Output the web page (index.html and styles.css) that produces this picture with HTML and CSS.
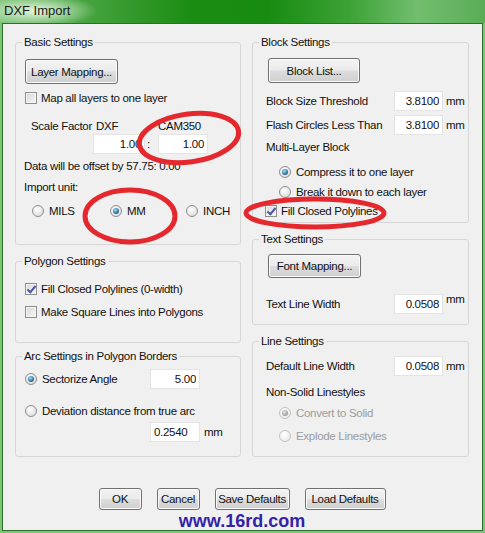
FILE: index.html
```html
<!DOCTYPE html>
<html lang="en">
<head>
    <meta charset="UTF-8">
    <title>DXF Import</title>
    <link rel="stylesheet" href="styles.css">
</head>
<body>
    <div class="window">
        <div class="titlebar"><span class="title">DXF Import</span></div>

        <div class="client">
            <div class="columns">
                <div class="col">
                    <fieldset class="group basic">
                        <legend>Basic Settings</legend>
                        <button class="btn btn-layer">Layer Mapping...</button>
                        <label class="opt opt-map"><span class="check"></span>Map all layers to one layer</label>
                        <div class="scale">
                            <span>Scale Factor</span>
                            <span class="scale-dxf">DXF</span>
                            <span></span>
                            <span>CAM350</span>
                            <span></span>
                            <input class="field" type="text" value="1.00">
                            <span class="colon">:</span>
                            <input class="field" type="text" value="1.00">
                        </div>
                        <div class="line offset">Data will be offset by 57.75: 0.00</div>
                        <div class="line unit-label">Import unit:</div>
                        <div class="units">
                            <label class="opt"><span class="radio"></span>MILS</label>
                            <label class="opt"><span class="radio on"></span>MM</label>
                            <label class="opt"><span class="radio"></span>INCH</label>
                        </div>
                    </fieldset>

                    <fieldset class="group polygon">
                        <legend>Polygon Settings</legend>
                        <label class="opt poly-fill"><span class="check on"></span>Fill Closed Polylines (0-width)</label>
                        <label class="opt poly-square"><span class="check"></span>Make Square Lines into Polygons</label>
                    </fieldset>

                    <fieldset class="group arc">
                        <legend>Arc Settings in Polygon Borders</legend>
                        <div class="arc-row">
                            <label class="opt"><span class="radio on"></span>Sectorize Angle</label>
                            <input class="field" type="text" value="5.00">
                        </div>
                        <label class="opt arc-dev"><span class="radio"></span>Deviation distance from true arc</label>
                        <div class="arc-dist">
                            <input class="field left" type="text" value="0.2540">
                            <span class="unit">mm</span>
                        </div>
                    </fieldset>
                </div>

                <div class="col">
                    <fieldset class="group right block">
                        <legend>Block Settings</legend>
                        <button class="btn btn-block">Block List...</button>
                        <div class="value-row first">
                            <span>Block Size Threshold</span>
                            <input class="field" type="text" value="3.8100">
                            <span>mm</span>
                        </div>
                        <div class="value-row">
                            <span>Flash Circles Less Than</span>
                            <input class="field" type="text" value="3.8100">
                            <span>mm</span>
                        </div>
                        <div class="line multi">Multi-Layer Block</div>
                        <label class="opt sub compress"><span class="radio on"></span>Compress it to one layer</label>
                        <label class="opt sub break"><span class="radio"></span>Break it down to each layer</label>
                        <label class="opt block-fill"><span class="check on"></span>Fill Closed Polylines</label>
                    </fieldset>

                    <fieldset class="group right text">
                        <legend>Text Settings</legend>
                        <button class="btn btn-font">Font Mapping...</button>
                        <div class="value-row text-width">
                            <span>Text Line Width</span>
                            <input class="field" type="text" value="0.0508">
                            <span class="raised">mm</span>
                        </div>
                    </fieldset>

                    <fieldset class="group right linegroup">
                        <legend>Line Settings</legend>
                        <div class="value-row first">
                            <span>Default Line Width</span>
                            <input class="field" type="text" value="0.0508">
                            <span>mm</span>
                        </div>
                        <div class="line nonsolid">Non-Solid Linestyles</div>
                        <label class="opt sub disabled convert"><span class="radio on"></span>Convert to Solid</label>
                        <label class="opt sub disabled explode"><span class="radio"></span>Explode Linestyles</label>
                    </fieldset>
                </div>
            </div>

            <div class="actions">
                <button class="btn btn-ok">OK</button>
                <button class="btn btn-cancel">Cancel</button>
                <button class="btn btn-save">Save Defaults</button>
                <button class="btn btn-load">Load Defaults</button>
            </div>
            <div class="watermark">www.16rd.com</div>
        </div>

        <!-- red marker rings drawn over the dialog -->
        <svg class="marks" width="485" height="533" viewBox="0 0 485 533">
            <ellipse cx="189" cy="138" rx="50" ry="24" transform="rotate(-8 189 138)"/>
            <ellipse cx="130" cy="216" rx="45" ry="26"/>
            <ellipse cx="315" cy="213" rx="69" ry="14"/>
        </svg>
    </div>
</body>
</html>
```

FILE: styles.css
```css
html, body {
    margin: 0;
    padding: 0;
    background: #ffffff;
}

body {
    font-family: "Liberation Sans", Arial, sans-serif;
    font-size: 11.5px;
    letter-spacing: -0.3px;
    color: #111;
}

.window {
    position: relative;
    width: 485px;
    height: 533px;
    box-sizing: border-box;
    padding: 0 2px 2px 2px;
    background: #7cc478;
    display: flex;
    flex-direction: column;
}

.titlebar {
    height: 24px;
    margin: 0 -2px;
    background:
        radial-gradient(ellipse 62px 16px at 36px 11px, rgba(236, 250, 232, 0.95), rgba(236, 250, 232, 0)),
        linear-gradient(to right, #78c174 0%, #45a33f 18%, #1a8c12 40%, #178b10 55%, #3ca236 72%, #72be6e 86%, #5aad56 100%);
    display: flex;
    align-items: center;
}

.title {
    font-size: 13px;
    letter-spacing: 0;
    color: #1a1a1a;
    margin-left: 4px;
    margin-top: -3px;
}

.client {
    flex: 1;
    border: 1px solid #2f6d2b;
    background: #f0f0f0;
    padding: 11px 13px 0 12px;
}

.columns {
    display: grid;
    grid-template-columns: 226px 217px;
    column-gap: 11px;
}

.col {
    display: flex;
    flex-direction: column;
}

/* group boxes */
.group {
    margin: 0;
    padding: 0 8px;
    border: 1px solid #d6d6d6;
    border-radius: 3px;
    box-sizing: border-box;
    min-width: 0;
}

.group legend {
    padding: 0 2px;
    margin-left: -2px;
    line-height: 14px;
}

.group.right {
    padding: 0 13px;
}

.group.right legend {
    margin-left: -7px;
}

.basic { height: 210px; }
.polygon { height: 89px; margin-top: 9px; }
.arc { height: 108px; margin-top: 6px; }
.block { height: 188px; }
.text { height: 93px; margin-top: 9px; }
.linegroup { height: 123px; margin-top: 9px; }

.line {
    line-height: 14px;
    white-space: nowrap;
}

/* buttons */
.btn {
    display: block;
    box-sizing: border-box;
    padding: 0;
    border: 1px solid #707070;
    border-radius: 3px;
    background: linear-gradient(#f3f3f3 0%, #ebebeb 48%, #dddddd 52%, #cfcfcf 100%);
    box-shadow: inset 0 0 0 1px #fbfbfb;
    font-family: inherit;
    font-size: 11.5px;
    letter-spacing: -0.3px;
    color: #111;
    white-space: nowrap;
}

.btn-layer { width: 93px; height: 25px; margin: 10px 0 0 1px; }
.btn-block { width: 92px; height: 25px; margin: 9px 0 0 2px; }
.btn-font { width: 93px; height: 24px; margin: 8px 0 0 2px; }

/* checkbox & radio */
.opt {
    display: flex;
    align-items: center;
    height: 14px;
    white-space: nowrap;
}

.check {
    width: 12px;
    height: 12px;
    box-sizing: border-box;
    border: 1px solid #8f8f8f;
    background: linear-gradient(135deg, #d8d8d8, #f7f7f7);
    box-shadow: inset 0 0 0 1px #f4f4f4;
    margin-right: 4px;
    position: relative;
    flex: none;
}

.check.on::after {
    content: "";
    position: absolute;
    left: 3px;
    top: 0px;
    width: 3px;
    height: 7px;
    border: solid #4b55a6;
    border-width: 0 2px 2px 0;
    transform: rotate(40deg);
}

.radio {
    width: 12px;
    height: 12px;
    box-sizing: border-box;
    border: 1px solid #8e8e8e;
    border-radius: 50%;
    background: radial-gradient(circle at 40% 35%, #ffffff, #d4d4d4);
    margin-right: 5px;
    position: relative;
    flex: none;
}

.radio.on::after {
    content: "";
    position: absolute;
    left: 2px;
    top: 2px;
    width: 6px;
    height: 6px;
    border-radius: 50%;
    background: radial-gradient(circle at 40% 35%, #9fe0ff, #1c5f8c 70%);
}

.opt.disabled {
    color: #9c9c9c;
}

.opt.disabled .radio {
    border-color: #c2c2c2;
    background: radial-gradient(circle at 40% 35%, #ffffff, #e6e6e6);
}

.opt.disabled .radio.on::after {
    background: radial-gradient(circle at 40% 35%, #e6e6e6, #9a9a9a 70%);
}

/* edit boxes */
.field {
    box-sizing: border-box;
    height: 20px;
    padding: 0 3px;
    border: 1px solid #e4e4e4;
    background: #fff;
    font-family: inherit;
    font-size: 11.5px;
    letter-spacing: -0.3px;
    color: #111;
    text-align: right;
    width: 100%;
    min-width: 0;
}

.field.left {
    text-align: left;
}

/* basic settings */
.opt-map { margin: 7px 0 0 1px; }

.scale {
    display: grid;
    grid-template-columns: 62px 52px 13px 50px;
    grid-template-rows: 14px 20px;
    row-gap: 1px;
    margin: 14px 0 0 7px;
    line-height: 14px;
    white-space: nowrap;
}

.scale-dxf { padding-left: 3px; }

.colon {
    padding-left: 2px;
    line-height: 20px;
}

.offset { margin-top: 5px; }
.unit-label { margin-top: 7px; }

.units {
    display: grid;
    grid-template-columns: 78px 76px auto;
    margin: 10px 0 0 8px;
}

/* polygon settings */
.poly-fill { margin: 14px 0 0 1px; }
.poly-square { margin: 9px 0 0 1px; }

/* arc settings */
.arc-row {
    display: grid;
    grid-template-columns: 125px 50px;
    align-items: center;
    height: 20px;
    margin: 6px 0 0 1px;
}

.arc-dev { margin: 15px 0 0 1px; }

.arc-dist {
    display: flex;
    align-items: center;
    margin: 4px 0 0 126px;
}

.arc-dist .field { width: 50px; }

.unit { margin-left: 4px; }

/* right column rows */
.value-row {
    display: grid;
    grid-template-columns: 125px 49px auto;
    column-gap: 3px;
    align-items: center;
    height: 20px;
    margin-top: 4px;
    white-space: nowrap;
}

.value-row.first { margin-top: 8px; }
.text-width { margin-top: 16px; }
.raised { align-self: start; margin-top: -1px; }

.multi { margin-top: 5px; }
.sub { margin-left: 13px; }
.compress { margin-top: 11px; }
.break { margin-top: 6px; }
.block-fill { margin: 5px 0 0 -1px; }

.nonsolid { margin-top: 9px; }
.convert { margin-top: 7px; }
.explode { margin-top: 9px; }

/* bottom buttons */
.actions {
    display: flex;
    justify-content: center;
    gap: 15px;
    margin-top: 31px;
}

.actions .btn { height: 22px; }
.btn-ok { width: 43px; }
.btn-cancel { width: 43px; }
.btn-save { width: 75px; }
.btn-load { width: 81px; }

.watermark {
    margin-top: 2px;
    text-align: center;
    font-weight: bold;
    font-size: 18px;
    line-height: 18px;
    letter-spacing: 0;
    color: #3322aa;
}

.marks {
    position: absolute;
    left: 0;
    top: 0;
    pointer-events: none;
}

.marks ellipse {
    fill: none;
    stroke: #e4282d;
    stroke-width: 5;
}
```
